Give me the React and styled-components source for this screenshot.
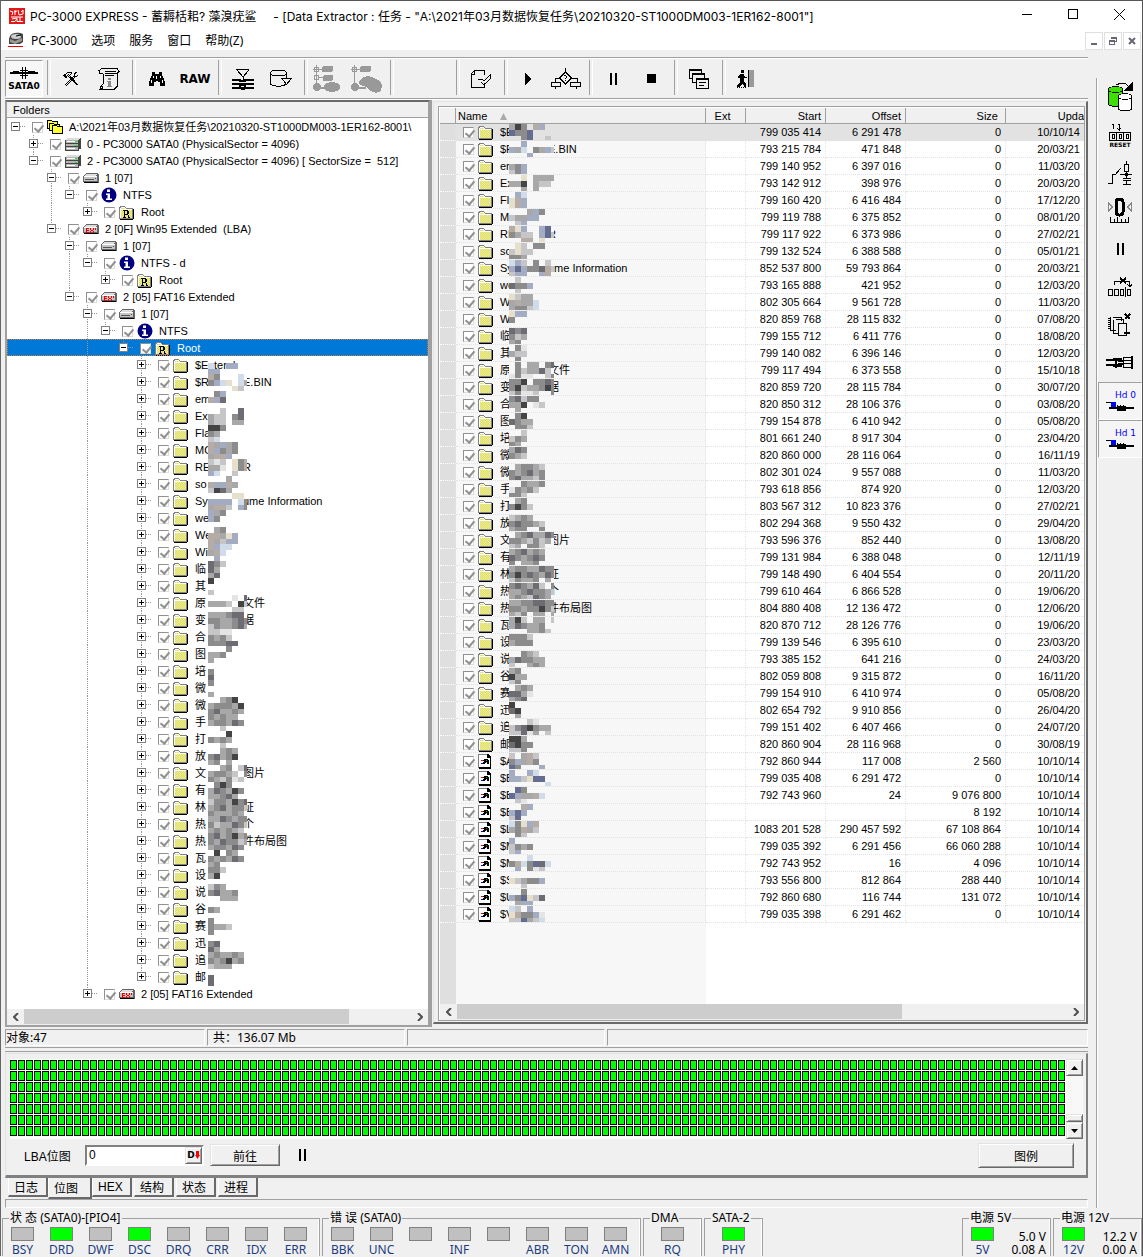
import React from "react";
import styled, { createGlobalStyle } from "styled-components";

const GlobalStyle = createGlobalStyle`
  * { box-sizing: border-box; }
  body {
    margin: 0;
    background: #f0f0f0;
    color: #000;
    font-family: "Liberation Sans", "Noto Sans CJK SC", sans-serif;
    font-size: 11px;
  }
  button, input { font: inherit; color: inherit; }
  button { padding: 0; }
`;

const uiFont = `"Noto Sans", "Noto Sans CJK SC", sans-serif`;
const titleFont = `Inter, "Noto Sans CJK SC", sans-serif`;

// colours of the censor blocks
const shades = {
  k: "#444", d: "#6c6c72", m: "#8c8c8c", g: "#a8a8a8", l: "#c6c6c8", w: "#e4e4e4",
  b: "#a4acc4", c: "#d0dcea", t: "#b6aca6", y: "#e6dfcc", n: "#646c90",
};

// [head, tail, tree blocks, list blocks]
const folders = [
  ["$Extend", "", "......./c..bb../bb.....", "gkm.tb./nmmn.../..mn..l"],
  ["$R", "E.BIN", "tm...c./mbcy.ct/....yl.", "..b..../bgc.mgbl/...b..."],
  ["em", "", ".mb..../tbd..../.......", "......./gmb..../lmb...."],
  ["Ex", "", "..l..d./gll.md./gll.gg.", "..y.gggg/ggk.gll./..g.g..."],
  ["Fla", "", "kkm..../mg...../lc.....", ".bc..../ytb..../ytb...."],
  ["MO", "", "tgbgm../tbmgm../gttb...", "...gbm./lggbb../.lb...."],
  ["RE", "R", "lwl.ymt/ggw.ymt/bc..l..", "tyb..bn/mgll.bnl/..tt.y."],
  ["so", "", "...g.../tbbtg../lkdg...", ".yl.mm./lyll.../mmg...."],
  ["System", "ume Information", "....yy./bbbb.cm/gttl.bm", "cbl.m.l/bnbmmdtl/lbb..bt"],
  ["we", "", "bgm..../bm...../.......", ".l...../dmmb.../.l....."],
  ["We", "", ".gm..../ttgyb../tglbb..", "ylgg.../gtggc../gmmlc.."],
  ["Wi", "", "tbcc.../gtc..../.b.....", "ybb..../m....../......."],
  ["临", "", "dml..../dg...../gd.....", "dmd..../mlg..../gm....."],
  ["其", "", "k....../......./l......", ".mw..../gll..../.m....."],
  ["原", "文件", "....w.d/gggl.kl/....ll.", ".m.gg.md/.mlggdl./wmww..lm"],
  ["变", "据", "gggmdd./mmggmdm/lmggmdg", "mmk.mmdm/mklggmkm/lmwwl..m"],
  ["合", "", "llww.../mgml.../mmmdd..", "mdlmm../ggk.wl./.g....."],
  ["图", "", "...m.../ggm..../g......", ".mk..../dmgg.../.mml..."],
  ["培", "", "......./m....../d......", "..l..../lmg..../mg....."],
  ["微", "", "m....../......./g......", "gdm..../mgl..../......."],
  ["微", "", "..gmk../gmmmgk./mdggmg.", ".gmmgl./mgmdgm./mdgglm."],
  ["手", "", "mgmgg../gmmgdm./..l....", "..mggm./wmgml../mml...."],
  ["打", "", "...k.../mgmg.../..l....", ".gm..../mkml.../......."],
  ["放", "", "..gmg../mdgmk../gm.g...", "lgmg.../mdmmgl./gmm..m."],
  ["文", "图片", "..gm.ld/gmmgl.m/mglmwl.", ".gmdggdm/mmglmlg./lg.mml.."],
  ["有", "", ".mkm.../gdmgkm./ggmdg..", "gmdgmg./dmgmdm./m.ggm.."],
  ["林", "证", "lmmgkmd/gmdgmml/mgggmg.", "gmmggdmm/mkmdmgdm/lmggm.g."],
  ["热", "个", "ggdmgmm/mlggdml/gmgmgl.", "mdmgdl.m/ggmdmmgl/gmgldmg."],
  ["热", "件布局图", "mdgmkgm/mgdmmlg/gmmgdm.", "ggmmddmm/mmgmmkml/glm.gg.g"],
  ["瓦", "", ".k.mg../mgmgdm./gm.....", "gkl.gg.l/gdmggm./...ggml"],
  ["设", "", "mml..../gk...../.......", "mmml.../gmmm.../......."],
  ["说", "", "lmg..../mdggm../..ggg..", "..mgl../gdmmgg./l..gmg."],
  ["谷", "", "......./mg...../.......", "gm...../kgg..../lm....."],
  ["赛", "", "m....../mggl.../m......", ".gmg.../ddgw.../gmd...."],
  ["迅", "", "......./md...../dg.....", "k....../dk...../.g....."],
  ["追", "", "gmggmg./mgmkgm./lggg...", "...lw../lmdkmgg/lldwg.l"],
  ["邮", "", "......./d....../d......", "kkg..../dkmm.../llm...."],
];

const folderStats = [
  ["799 035 414", "6 291 478", "10/10/14"], ["793 215 784", "471 848", "20/03/21"],
  ["799 140 952", "6 397 016", "11/03/20"], ["793 142 912", "398 976", "20/03/20"],
  ["799 160 420", "6 416 484", "17/12/20"], ["799 119 788", "6 375 852", "08/01/20"],
  ["799 117 922", "6 373 986", "27/02/21"], ["799 132 524", "6 388 588", "05/01/21"],
  ["852 537 800", "59 793 864", "20/03/21"], ["793 165 888", "421 952", "12/03/20"],
  ["802 305 664", "9 561 728", "11/03/20"], ["820 859 768", "28 115 832", "07/08/20"],
  ["799 155 712", "6 411 776", "18/08/20"], ["799 140 082", "6 396 146", "12/03/20"],
  ["799 117 494", "6 373 558", "15/10/18"], ["820 859 720", "28 115 784", "30/07/20"],
  ["820 850 312", "28 106 376", "03/08/20"], ["799 154 878", "6 410 942", "05/08/20"],
  ["801 661 240", "8 917 304", "23/04/20"], ["820 860 000", "28 116 064", "16/11/19"],
  ["802 301 024", "9 557 088", "11/03/20"], ["793 618 856", "874 920", "12/03/20"],
  ["803 567 312", "10 823 376", "27/02/21"], ["802 294 368", "9 550 432", "29/04/20"],
  ["793 596 376", "852 440", "13/08/20"], ["799 131 984", "6 388 048", "12/11/19"],
  ["799 148 490", "6 404 554", "20/11/20"], ["799 610 464", "6 866 528", "19/06/20"],
  ["804 880 408", "12 136 472", "12/06/20"], ["820 870 712", "28 126 776", "19/06/20"],
  ["799 139 546", "6 395 610", "23/03/20"], ["793 385 152", "641 216", "24/03/20"],
  ["802 059 808", "9 315 872", "16/11/20"], ["799 154 910", "6 410 974", "05/08/20"],
  ["802 654 792", "9 910 856", "26/04/20"], ["799 151 402", "6 407 466", "24/07/20"],
  ["820 860 904", "28 116 968", "30/08/19"],
];

const files = [
  ["$A", "l.gtl../mbgtm../nm...b.", "792 860 944", "117 008", "2 560"],
  ["$B", "b..bc../bblynn./......c", "799 035 408", "6 291 472", "0"],
  ["$B", ".nm..../nbggtc./.lw....", "792 743 960", "24", "9 076 800"],
  ["$B", "..tb.../bnb..../ln.....", "", "", "8 192"],
  ["$L", "cmybt../gmtgl../.ml....", "1083 201 528", "290 457 592", "67 108 864"],
  ["$M", "b....../lmgm.../lb.....", "799 035 392", "6 291 456", "66 060 288"],
  ["$M", "...c.../mtcmndc/.b.mwl.", "792 743 952", "16", "4 096"],
  ["$S", "......./ylgmmb./..l....", "793 556 800", "812 864", "288 440"],
  ["$U", "..m..../bmnyld./.gbb...", "792 860 680", "116 744", "131 072"],
  ["$V", "cl.b.../ytmmbw./llnglc.", "799 035 398", "6 291 462", "0"],
];

/* ---------- small drawings ---------- */

const FolderIcon = ({ letter }) => (
  <svg width="16" height="16" viewBox="0 0 16 16" shapeRendering="crispEdges">
    <defs>
      <pattern id="dither" width="2" height="2" patternUnits="userSpaceOnUse">
        <rect width="2" height="2" fill="#ff0" />
        <rect width="1" height="1" fill="#ccf" />
        <rect x="1" y="1" width="1" height="1" fill="#ccf" />
      </pattern>
    </defs>
    <path d="M14 5h1v10h-1v1H1v-1h13z" fill="#000" />
    <path d="M0 4V3h1V2h5v1h1v1h7v11H0z" fill="#808080" />
    <path d="M1 4h1V3h4v1h1v1h6v9H1z" fill="#fff" />
    <path d="M2 6h11v8H2zM2 4h4v1H2z" fill="url(#dither)" />
    {letter && <path d="M4 6h5v1h1v3H9v1h1v2h1v1H9v-3H6v2h1v1H4v-1h1V7H4zM6 7v3h2V7z" fill="#000" fillRule="evenodd" />}
  </svg>
);

const FileIcon = () => (
  <svg width="16" height="16" viewBox="0 0 16 16" shapeRendering="crispEdges">
    <path d="M1 1h9l3 3v12H1z" fill="#000" />
    <path d="M0 1h9v1H0zM0 1h1v14H0z" fill="#808080" />
    <path d="M1 2h8v3h3v9H1z" fill="#fff" />
    <path d="M3 7h2v1H3z" fill="#f00" />
    <path d="M3 10h2v1H3z" fill="#00f" />
    <path d="M5 7h1V6h4v1h1v4H9v-1H7v1H5V9h1V8H5z" fill="#000" />
    <path d="M8 7h1v1H8z" fill="#0a0" />
    <path d="M8 9h1v1H8z" fill="#dd0" />
  </svg>
);

const StackIcon = () => (
  <svg width="16" height="16" viewBox="0 0 16 16" shapeRendering="crispEdges">
    <g fill="#ff3" stroke="#000">
      <path d="M.5 9.500v-8h4l1 1h5v7z" />
      <path d="M2.500 11.500v-7h4l1 1h5v6z" />
      <path d="M5.500 14.500v-8h4l1 1h5v7z" />
    </g>
  </svg>
);

const DiskIcon = () => (
  <svg width="16" height="14" viewBox="0 0 16 14" shapeRendering="crispEdges">
    <path d="M2 1h14v11h-2v2H0V3z" fill="#444" />
    <path d="M2 1h13l-2 2H1z" fill="#ddd" />
    <path d="M1 3h12v3H1zM1 7h12v2H1zM1 10h12v3H1z" fill="#b4b4b4" />
    <path d="M2 4h8v1H2zM2 11h8v1H2z" fill="#fff" />
    <path d="M10 4h2v1h-2zM10 8h2v1h-2z" fill="#0f0" />
  </svg>
);

const DriveIcon = ({ ext }) => (
  <svg width="16" height="10" viewBox="0 0 16 10" shapeRendering="crispEdges">
    <path d="M3 0h11l2 2v7l-1 1H1V9H0V3z" fill="#666" />
    <path d="M3 1h11l-1 2H1z" fill="#ddd" />
    <path d="M1 3h13v5H1z" fill="#c4c4c4" />
    <path d="M1 3h13v1H1z" fill="#fff" />
    <path d="M1 9h14v1H1z" fill="#000" />
    {ext
      ? <path d="M3 4h3v1H4v1h2v1H4v1h2v1H3zM7 4h1v2h1v1H8v2H7V7h1V6H7zM10 4h1v2h-1v1h1v2h-1V7H9V6h1zM12 4h1v2h-1z" fill="#e00" />
      : <path d="M2 6h9v1H2zM12 5h1v1h-1z" fill="#555" />}
  </svg>
);

const InfoIcon = () => (
  <svg width="16" height="16" viewBox="0 0 16 16">
    <circle cx="8" cy="8" r="7.500" fill="#000080" />
    <path d="M6 2.500h3v2.500H6zM5 6.500h4v5h2v1.500H5v-1.500h1.500V8H5z" fill="#fff" />
  </svg>
);

const LogoIcon = () => (
  <svg width="16" height="16" viewBox="0 0 16 16">
    <rect width="16" height="16" fill="#e01818" />
    <path d="M1 3l3 1-1 3M6 2v5M5 4l3-1M9 2l1 5 4-1V2l-2 2M2 9h12M3 11l5-1M2 13.500h4l2-3v3h6M11 9v4" stroke="#fff" fill="none" />
  </svg>
);

const DiscIcon = () => (
  <svg width="16" height="16" viewBox="0 0 16 16">
    <path d="M2 4c2-4 9-4 13-2v8l-3 2H1V7z" fill="#444" />
    <ellipse cx="8" cy="4.500" rx="5" ry="2.500" fill="#ccc" />
    <path d="M2 7l5 2 7-3v3l-7 3-5-2z" fill="#999" />
    <path d="M8 4l5-1" stroke="#000" />
    <path d="M0 14.500h15" stroke="#e00" strokeWidth="1" />
  </svg>
);

const Icon = ({ w = 30, h = 30, children }) => (
  <svg width={w} height={h} viewBox={`0 0 ${w} ${h}`} shapeRendering="crispEdges" fill="none" stroke="#000">
    {children}
  </svg>
);

const SataIcon = () => (
  <Icon w={28} h={14}>
    <path d="M0 7h28M3 6h6M18 6h7" strokeWidth="2" />
    <path d="M12.500 1v12M15.500 1v12M10 4.500h8M10 9.500h8" />
  </Icon>
);
const ToolsIcon = () => (
  <Icon w={16} h={16}>
    <path d="M1 5l4-4 4 1-3 3M4 4l10 10M5 3l10 11" />
    <path d="M14 1l-3 2v2l2 1 2-2M11 5l-9 9M12 6l-9 9" />
    <path d="M1 4l3 3" strokeWidth="2" />
  </Icon>
);
const ScrollIcon = () => (
  <Icon w={24} h={24}>
    <path d="M5 1.500h15l2 3-2 2H8M5 1.500l-3 2 1 3h3l1 9-3 4-1 3h14l3-3V6M8 4.500h11M8 8.500h9" />
    <path d="M3 19l3 1-2 3" />
    <path d="M11 11h3v2h-3zM10 14h4v5h1v1h-5v-1h1v-4h-1z" fill="#888" stroke="none" />
  </Icon>
);
const BinocularIcon = () => (
  <Icon w={16} h={14}>
    <path d="M3 0h3v2h4V0h3v3l1 2 2 5v4h-5v-4H9V9H7v1H5v4H0v-4l2-5 1-2z" fill="#000" stroke="none" />
    <path d="M4.500 4v2M2.500 8v3M11.500 4v2M13.500 8v3M7.500 4v3" stroke="#fff" />
  </Icon>
);
const PressIcon = () => (
  <Icon w={24} h={22}>
    <path d="M5 1.500h13M6 2l6 7 6-7M12 9v3" />
    <path d="M1 12h8v1h5v-1h9M1 16h22M1 20h8l3 1 3-1h8M9 17h5v3H9z" strokeWidth="2" />
  </Icon>
);
const CylinderIcon = () => (
  <Icon w={24} h={20}>
    <path d="M1.500 4v10c0 4 14 4 15 1M1.500 4c0-4 16-4 16 0s-16 4-16 0M17.500 4v5" />
    <path d="M13 9.500h9.500l-5 6z" fill="#f0f0f0" />
  </Icon>
);
const TreeMapIcon = ({ blob }) => (
  <Icon w={32} h={28}>
    <g stroke="#999" fill="none">
      <path d="M3.500 0v26M0 4.500h12M1.500 2.500h4v4h-4z" />
      {!blob && <path d="M1.500 10.500h4v4h-4zM6 12.500h6" />}
      <path d="M3 23h12" strokeWidth="2" />
    </g>
    <g fill="#999" stroke="none">
      <rect x="9" y="1" width="11" height="6" rx="2" />
      <circle cx="4" cy="22" r="4" />
      {blob
        ? <path d="M11 13l5-2 5 1 4 2 4 2 2 4-1 6-5 2-6-2-4-4-6-2-1-3z" />
        : <g><rect x="10" y="10" width="10" height="6" rx="2" /><ellipse cx="19" cy="22" rx="8" ry="5" /></g>}
    </g>
  </Icon>
);
const DocIcon = () => (
  <Icon w={22} h={20}>
    <path d="M1.500 4.500l3-3h10v4M1.500 4v14.500h13V14M1.500 5.500h3v-4" />
    <path d="M8 10h4l2 2 6-6v4l-6 6-3-3" />
  </Icon>
);
const FlowIcon = () => (
  <Icon w={32} h={22}>
    <path d="M15.500 0v4M15.500 4l6 6-6 6-6-6zM9 10H5v4M21 10h6v4M1.500 14.500h9v4h-9zM20.500 14.500h10v4h-10zM5.500 18v3M26.500 18v3" />
    <path d="M14 7.500h2M16.500 8v2M15.500 10v1M15.500 12v1" />
  </Icon>
);
const PauseIcon = () => <Icon w={9} h={12}><path d="M2 0v12M7 0v12" strokeWidth="2" /></Icon>;
const PlayIcon = () => <Icon w={8} h={12}><path d="M1 0l6 6-6 6z" fill="#000" stroke="none" /></Icon>;
const StopIcon = () => <Icon w={9} h={9}><path d="M0 0h9v9H0z" fill="#000" stroke="none" /></Icon>;
const WindowsIcon = () => (
  <Icon w={20} h={22}>
    <g fill="#f0f0f0">
      <path d="M.5 1.500h12v9H.5z" /><path d="M0 2h13" strokeWidth="2" />
      <path d="M3.500 5.500h12v9h-12z" /><path d="M3 6h13" strokeWidth="2" />
      <path d="M7.500 10.500h12v10h-12z" /><path d="M7 11h13" strokeWidth="2" />
      <path d="M10 14.500h7M10 17.500h5" />
    </g>
  </Icon>
);
const ExitIcon = () => (
  <Icon w={20} h={20}>
    <path d="M5 1h3v3H5zM4 5h4l1 3h2v1H8v3l2 3v3H8l-1-4-3 4H1v-1l3-4V9H2V7z" fill="#000" stroke="none" />
    <path d="M1 18.500h9" strokeDasharray="1 1" />
    <path d="M12 1h6v17h-6z" fill="#999" stroke="none" />
    <path d="M12.500 1v17" />
  </Icon>
);

const CopyDiskIcon = () => (
  <Icon w={26} h={30}>
    <g strokeWidth="1">
      <path d="M1.500 8v14c0 3 14 3 14 0V8" fill="#3ce000" />
      <ellipse cx="8.500" cy="7.500" rx="7" ry="3" fill="#3ce000" />
      <path d="M11.500 15v11c0 4 13 4 13 0V15" fill="#fff" />
      <ellipse cx="18" cy="14.500" rx="6.500" ry="3" fill="#fff" />
      <path d="M9 3l5-2h4l5 5" />
      <path d="M25 1v7h-7z" fill="#000" />
    </g>
  </Icon>
);
const CounterIcon = () => (
  <Icon w={22} h={18}>
    <path d="M3 1.500h1v4M9 1.500h1v6M8 5l2 2 2-2M.5 9.500h21v8H.5zM7.500 9v8M14.500 9v8M3 11.500h2v4H3zM10 11.500h2v4h-2zM17 11.500h2v4h-2z" />
  </Icon>
);
const SwitchIcon = () => (
  <Icon w={24} h={24}>
    <path d="M0 22.500h4.500v-9h3l5-6M12 13h12M18.500 0v3M16.500 3.500h4v7h-4zM18.500 10v7M15 17.500h8M15 19.500h8M18.500 20v4M15 23.500h8" />
    <path d="M17 13h3" strokeWidth="3" />
  </Icon>
);
const ZeroIcon = () => (
  <Icon w={26} h={28}>
    <rect x="9" y="2" width="7" height="16" rx="3" strokeWidth="3" />
    <path d="M1.500 6v8l4-4zM24.500 6v8l-4-4z" stroke="#888" />
    <path d="M3 25.500h19M3.500 20v5M7.500 22v3M10.500 20v5M14.500 22v3M18.500 22v3M21.500 20v5" />
  </Icon>
);
const DigitsIcon = () => (
  <Icon w={24} h={20}>
    <path d="M.5 12.500h4v6h-4zM6.500 12.500h4v6h-4zM12.500 12.500h3v6h-3zM19.500 12.500h3v6h-3zM17.500 10v10M6.500 8V4h15v5M19 7l3 3 2-3" />
    <path d="M12 1l6 5M18 1l-6 5" strokeWidth="2" />
  </Icon>
);
const PagesIcon = () => (
  <Icon w={24} h={24}>
    <path d="M4.500 4.500h9v3M2.500 4v13h5M7.500 6.500h8v4M5.500 7v13h5M10.500 10.500h8v12h-8z" />
    <path d="M1 5v12" strokeWidth="2" strokeDasharray="1 1" />
    <path d="M17 1l5 5M22 1l-5 5M16 20h6" strokeWidth="2" />
  </Icon>
);
const ConnectorIcon = () => (
  <Icon w={28} h={14}>
    <path d="M0 4h12M0 9h12" strokeWidth="2" />
    <path d="M7 3h9M7 10h9M10 2v10M12 5h5M12 8h5" strokeWidth="2" />
    <path d="M17 1.500h8M17 4.500h8M17 7.500h8M17 11.500h8M17.500 2v10" />
    <path d="M26 0v13" strokeWidth="2" />
  </Icon>
);
const HdPlugIcon = () => (
  <Icon w={28} h={12}>
    <path d="M0 2.500h5" />
    <path d="M5 2h5v5H5z" fill="#00f" stroke="none" />
    <path d="M3 8h25M11 8h10" strokeWidth="2" />
    <path d="M11 5h1v1h2V5h1v1h2V5h1v1h2v5h-9z" fill="#000" stroke="none" />
  </Icon>
);

/* ---------- window ---------- */

const Window = styled.div`
  border-top: 1px solid #555;
  border-left: 1px solid #666;
  border-right: 1px solid #555;
  background: #f0f0f0;
`;

const TitleBar = styled.header`
  display: flex;
  align-items: center;
  height: 29px;
  padding-left: 8px;
  gap: 5px;
  background: #fff;
  font: 12px ${titleFont};
  white-space: pre;
`;

const Title = styled.span`
  flex: 1;
`;

const CaptionButton = styled.button`
  width: 46px;
  height: 29px;
  border: 0;
  background: none;
`;

const MenuBar = styled.nav`
  display: flex;
  align-items: center;
  height: 20px;
  padding: 0 1px 0 7px;
  background: #fff;
  font: 12px ${uiFont};
`;

const MenuItem = styled.button`
  border: 0;
  background: none;
  padding: 0 7px;
  white-space: nowrap;
`;

const MdiButtons = styled.div`
  display: flex;
  align-self: flex-end;
  gap: 1px;
  margin-left: auto;
`;

const MdiButton = styled.button`
  width: 18px;
  height: 18px;
  border: 1px solid #e0e0e0;
  background: #fff;
`;

const Body = styled.div`
  display: flex;
`;

const Main = styled.main`
  flex: 1;
  min-width: 0;
  padding: 7px 8px 0 4px;
`;

const Toolbar = styled.div`
  display: flex;
  height: 42px;
  border-top: 1px solid #a0a0a0;
  border-bottom: 1px solid #a0a0a0;
  box-shadow: inset 0 1px #fff, 0 1px #fff;
  padding-top: 2px;
`;

const ToolButton = styled.button`
  display: flex;
  flex-direction: column;
  align-items: center;
  justify-content: center;
  width: 38px;
  height: 37px;
  border: 1px solid;
  border-color: ${(p) => (p.$down ? "#a0a0a0 #fff #fff #a0a0a0" : "transparent")};
  background: ${(p) => (p.$down ? "#f7f7f7" : "none")};
  font: bold ${(p) => (p.$small ? 9 : 12)}px "DejaVu Sans", sans-serif;
  line-height: 12px;
`;

const Separator = styled.div`
  width: ${(p) => p.$w || 10}px;
  padding-left: 4px;
  margin-left: ${(p) => p.$space || 0}px;
  &::before {
    content: "";
    display: block;
    width: 2px;
    height: 35px;
    border-left: 1px solid #a0a0a0;
    border-right: 1px solid #fff;
  }
`;

const Panes = styled.div`
  display: flex;
  margin-top: 1px;
`;

/* ---------- tree ---------- */

const TreePane = styled.section`
  flex: 0 0 425px;
  border: 2px solid;
  border-color: #696969 #a0a0a0 #a0a0a0 #a0a0a0;
  background: #fff;
`;

const TreeHeader = styled.div`
  height: 16px;
  padding-left: 6px;
  border-bottom: 1px solid #a0a0a0;
  background: #f0f0f0;
  line-height: 17px;
`;

const TreeList = styled.ul`
  margin: 0 0 7px;
  padding: 0;
  list-style: none;
`;

const ItemLabel = styled.label`
  display: flex;
  align-items: center;
  height: 16px;
  padding-left: 7px;
  text-align: left;
  svg { flex: none; }
`;

const TreeRow = styled.li`
  display: flex;
  height: 17px;
  line-height: 17px;
  white-space: pre;
  color: ${(p) => (p.$selected ? "#fff" : "#000")};
  background: ${(p) => (p.$selected ? "#0078d7" : "none")};
  outline: ${(p) => (p.$selected ? "1px dotted #d08030" : "none")};
  outline-offset: -1px;
  ${ItemLabel} { height: 18px; }
`;

const Guide = styled.span`
  display: flex;
  align-items: center;
  flex: none;
  width: 18px;
  padding-left: 4px;
  background: repeating-linear-gradient(#999 0 1px, transparent 1px 2px) 8px 0 / 1px
    ${(p) => ({ full: "100%", top: "50%", none: "0" }[p.$line])} no-repeat;
`;

const Expander = styled.button`
  flex: none;
  width: 9px;
  height: 9px;
  border: 1px solid #808080;
  background:
    linear-gradient(#000, #000) 1px 3px / 5px 1px no-repeat,
    linear-gradient(#000, #000) 3px 1px / 1px ${(p) => (p.$open ? 0 : 5)}px no-repeat,
    #fff;
`;

const Dots = styled.span`
  width: 5px;
  border-top: 1px dotted #999;
`;

const Check = styled.input.attrs({ type: "checkbox", defaultChecked: true })`
  appearance: none;
  position: relative;
  flex: none;
  width: 11px;
  height: 11px;
  margin: 0 4px 0 0;
  border: 1px solid;
  border-color: #909090 #ddd #ddd #909090;
  background: #fff;
  &:checked::after {
    content: "";
    position: absolute;
    left: 3px;
    top: 0;
    width: 4px;
    height: 7px;
    border: solid #909090;
    border-width: 0 2px 2px 0;
    transform: rotate(40deg);
  }
`;

const IconBox = styled.span`
  display: flex;
  flex: none;
  align-items: center;
  width: 16px;
  margin-right: 6px;
`;

const Name = styled.span`
  position: relative;
  display: flex;
`;

const Head = styled.span`
  flex: none;
  width: 48px;
  clip-path: ${(p) => (p.$cut ? `inset(0 ${48 - p.$cut}px 0 0)` : "none")};
`;

const Blocks = styled.svg`
  position: absolute;
  top: 0;
  left: ${(p) => p.$left}px;
  background: ${(p) => p.$paper};
`;

const Censored = ({ head, tail, blocks, left, cols, paper }) => (
  <Name>
    <Head $cut={head === "$Extend" && left > 10 ? 0 : left}>{head}</Head>
    {tail}
    <Blocks
      $left={left}
      $paper={tail ? paper : "transparent"}
      width={cols * 6 - 3}
      height="17"
      shapeRendering="crispEdges"
      aria-hidden="true"
    >
      {blocks.split("/").map((line, y) =>
        [...line].map((c, x) => c !== "." && (
          <rect key={`${x}-${y}`} x={x * 6} y={y * 6} width="6" height="6" fill={shades[c]} />
        ))
      )}
    </Blocks>
  </Name>
);

const icons = {
  stack: <StackIcon />,
  disk: <DiskIcon />,
  drive: <DriveIcon />,
  ext: <DriveIcon ext />,
  info: <InfoIcon />,
  root: <FolderIcon letter />,
  folder: <FolderIcon />,
};

// level, own line, levels with a running line, expanded, icon, text
const topNodes = [
  [0, "none", [], true, "stack", "A:\\2021年03月数据恢复任务\\20210320-ST1000DM003-1ER162-8001\\"],
  [1, "full", [], false, "disk", "0 - PC3000 SATA0 (PhysicalSector = 4096)"],
  [1, "top", [], true, "disk", "2 - PC3000 SATA0 (PhysicalSector = 4096) [ SectorSize =  512]"],
  [2, "full", [], true, "drive", "1 [07]"],
  [3, "top", [2], true, "info", "NTFS"],
  [4, "top", [2], false, "root", "Root"],
  [2, "top", [], true, "ext", "2 [0F] Win95 Extended  (LBA)"],
  [3, "full", [], true, "drive", "1 [07]"],
  [4, "top", [3], true, "info", "NTFS - d"],
  [5, "top", [3], false, "root", "Root"],
  [3, "top", [], true, "ext", "2 [05] FAT16 Extended"],
  [4, "full", [], true, "drive", "1 [07]"],
  [5, "top", [4], true, "info", "NTFS"],
  [6, "top", [4], true, "root", "Root", true],
];

const TreeNode = ({ node, children }) => {
  const [level, line, running, open, icon, text, selected] = node;
  return (
    <TreeRow $selected={selected}>
      {Array.from({ length: level }, (_, i) => (
        <Guide key={i} $line={running.includes(i) ? "full" : "none"} />
      ))}
      <Guide $line={line}>
        <Expander $open={open} aria-label={open ? "-" : "+"} />
        <Dots />
      </Guide>
      <ItemLabel>
        <Check />
        <IconBox>{icons[icon]}</IconBox>
        {children || text}
      </ItemLabel>
    </TreeRow>
  );
};

const Tree = () => (
  <TreePane>
    <TreeHeader>Folders</TreeHeader>
    <TreeList>
      {topNodes.map((n, i) => <TreeNode key={i} node={n} />)}
      {folders.map(([head, tail, blocks], i) => (
        <TreeNode key={i} node={[7, i === folders.length - 1 ? "top" : "full", [4], false, "folder"]}>
          <Censored head={head} tail={tail} blocks={blocks} left={13} cols={7} paper="#fff" />
        </TreeNode>
      ))}
      <TreeNode node={[4, "top", [], false, "ext", "2 [05] FAT16 Extended"]} />
    </TreeList>
    <HScroll size="84%" />
  </TreePane>
);

/* ---------- scroll bars ---------- */

const HBar = styled.div`
  display: flex;
  height: 16px;
  background: #f0f0f0;
`;

const HArrow = styled.button`
  flex: none;
  width: 17px;
  border: 0;
  background: none;
`;

const HTrack = styled.div`
  flex: 1;
`;

const HThumb = styled.div`
  width: ${(p) => p.$size};
  height: 15px;
  background: #cdcdcd;
`;

const HScroll = ({ size }) => (
  <HBar>
    <HArrow aria-label="left">
      <svg width="6" height="8" fill="none" stroke="#505050" strokeWidth="2"><path d="M5 0L1 4l4 4" /></svg>
    </HArrow>
    <HTrack><HThumb $size={size} /></HTrack>
    <HArrow aria-label="right">
      <svg width="6" height="8" fill="none" stroke="#505050" strokeWidth="2"><path d="M1 0l4 4-4 4" /></svg>
    </HArrow>
  </HBar>
);

/* ---------- file list ---------- */

const Splitter = styled.div`
  width: 2px;
  margin-right: 1px;
  background: #a0a0a0;
`;

const ListPane = styled.section`
  flex: 1;
  min-width: 0;
  display: flex;
  margin: 1px 0 3px;
  padding: 4px 1px 1px 4px;
  border: solid;
  border-width: 1px 2px 2px 1px;
  border-color: #e3e3e3 #696969 #696969 #e3e3e3;
`;

const ListFrame = styled.div`
  flex: 1;
  min-width: 0;
  display: flex;
  flex-direction: column;
  border: 1px solid #a0a0a0;
  padding: 1px 0 0 1px;
  background: #fff;
`;

const ListTable = styled.table`
  width: 100%;
  table-layout: fixed;
  border-spacing: 0;
`;

const Th = styled.th`
  height: 16px;
  padding: 1px ${(p) => p.$pad ?? 4}px 0 2px;
  border-right: 1px solid #a0a0a0;
  border-bottom: 1px solid #a0a0a0;
  background: #f0f0f0;
  font-weight: normal;
  line-height: 14px;
  text-align: ${(p) => p.$align || "right"};
  white-space: nowrap;
  overflow: hidden;
  &:last-child { border-right: 0; }
`;

const Td = styled.td`
  height: 17px;
  padding: 0 4px 0 0;
  border-right: 1px dotted #e2e2e2;
  border-bottom: 1px dotted #e2e2e2;
  line-height: 16px;
  text-align: right;
  white-space: nowrap;
  overflow: hidden;
  &:last-child { padding-right: 4px; border-right: 0; }
`;

const Tr = styled.tr`
  background: ${(p) => (p.$current ? "#e2e2e2" : "#fff")};
  ${Td}:nth-child(1) { background: #dfdfdf; border-bottom-color: #fff; }
  ${Td}:nth-child(2) { background: ${(p) => (p.$current ? "#e2e2e2" : "#f7f7f7")}; }
`;

const Col = styled.col`
  width: ${(p) => (p.$w ? `${p.$w}px` : "auto")};
`;

const Filler = styled.div`
  flex: 1;
  display: grid;
  grid-template-columns: 16px 250px 1fr;
`;

const FillerCell = styled.span`
  background: ${(p) => p.$tone};
`;

const rows = [
  ...folders.map(([head, tail, , blocks], i) => {
    const [start, offset, date] = folderStats[i];
    return { head, tail, blocks, start, offset, size: "0", date, folder: true };
  }),
  ...files.map(([head, blocks, start, offset, size]) => ({ head, blocks, start, offset, size, date: "10/10/14" })),
];

const FileList = () => (
  <ListPane>
    <ListFrame>
      <ListTable>
        <colgroup>
          {[16, 250, 40, 80, 80, 100, 0].map((w, i) => <Col key={i} $w={w} />)}
        </colgroup>
        <thead>
          <tr>
            <Th aria-label="mark" />
            <Th $align="left">Name &nbsp;&nbsp; <svg width="7" height="7"><path d="M3.500 0L7 7H0z" fill="#aaa" /></svg></Th>
            <Th $align="center" $pad={8}>Ext</Th>
            <Th>Start</Th>
            <Th>Offset</Th>
            <Th $pad={7}>Size</Th>
            <Th $pad={0}>Upda</Th>
          </tr>
        </thead>
        <tbody>
          {rows.map((r, i) => (
            <Tr key={i} $current={i === 0}>
              <Td />
              <Td>
                <ItemLabel>
                  <Check />
                  <IconBox>{r.folder ? <FolderIcon /> : <FileIcon />}</IconBox>
                  <Censored head={r.head} tail={r.tail} blocks={r.blocks} left={9} cols={8} paper="#f7f7f7" />
                </ItemLabel>
              </Td>
              <Td />
              <Td>{r.start}</Td>
              <Td>{r.offset}</Td>
              <Td>{r.size}</Td>
              <Td>{r.date}</Td>
            </Tr>
          ))}
        </tbody>
      </ListTable>
      <Filler>
        <FillerCell $tone="#dfdfdf" />
        <FillerCell $tone="#f7f7f7" />
      </Filler>
      <HScroll size="73%" />
    </ListFrame>
  </ListPane>
);

/* ---------- status line and sector map ---------- */

const StatusLine = styled.div`
  display: grid;
  grid-template-columns: 200px 198px 198px 1fr;
  gap: 2px;
  margin-top: 2px;
  padding-bottom: 1px;
  border-bottom: 1px solid #a0a0a0;
  font: 12px ${uiFont};
`;

const StatusCell = styled.div`
  height: 17px;
  padding-left: ${(p) => p.$pad || 0}px;
  border: 1px solid;
  border-color: #a0a0a0 #fff #fff #a0a0a0;
  line-height: 15px;
  white-space: pre;
`;

const MapPane = styled.section`
  margin-top: 3px;
  padding-top: 1px;
  border-top: 1px solid #a0a0a0;
`;

const MapFrame = styled.div`
  padding: 5px 3px 4px 4px;
  border: solid;
  border-width: 1px 2px 3px 1px;
  border-color: #e3e3e3 #808080 #808080 #e3e3e3;
`;

const MapRow = styled.div`
  display: flex;
  height: 80px;
  background: #fff;
`;

const Sectors = styled.div`
  flex: 1;
  display: grid;
  grid-template-columns: repeat(auto-fill, 7px);
  grid-auto-rows: 10px;
  gap: 1px;
  padding-top: 1px;
  overflow: hidden;
`;

const Sector = styled.span`
  border: 1px solid #000;
  background: #0f0;
`;

const VBar = styled.div`
  display: flex;
  flex-direction: column;
  width: 17px;
  background: #f8f8f8;
`;

const Raised = styled.button`
  border: 1px solid;
  border-color: #e3e3e3 #696969 #696969 #e3e3e3;
  box-shadow: inset 1px 1px #fff, inset -1px -1px #a0a0a0;
  background: #f0f0f0;
`;

const VArrow = styled(Raised)`
  display: flex;
  align-items: center;
  justify-content: center;
  height: 17px;
`;

const VThumb = styled(Raised)`
  height: 8px;
  margin-top: auto;
`;

const MapTools = styled.div`
  display: flex;
  align-items: center;
  height: 32px;
  padding: 0 9px 0 14px;
  font-size: 12px;
`;

const MapLabel = styled.label`
  width: 61px;
`;

const LbaBox = styled.div`
  display: flex;
  width: 119px;
  height: 21px;
  border: 2px solid;
  border-color: #808080 #fff #fff #808080;
  background: #fff;
`;

const LbaInput = styled.input`
  flex: 1;
  min-width: 0;
  border: 0;
  padding: 0 2px;
  background: none;
  outline: 0;
`;

const DropButton = styled(Raised)`
  width: 17px;
  font: bold 9px "DejaVu Sans", sans-serif;
  display: flex;
  align-items: center;
  justify-content: center;
`;

const PushButton = styled(Raised)`
  width: ${(p) => p.$w}px;
  height: ${(p) => p.$h}px;
  margin: 0 18px 0 6px;
`;

const LegendButton = styled(PushButton)`
  margin: 0 0 0 auto;
`;

const Tabs = styled.div`
  display: flex;
  gap: 2px;
  height: 21px;
  padding-left: 3px;
  font-size: 12px;
`;

const Tab = styled.button`
  width: ${(p) => (p.$active ? 44 : 40)}px;
  height: ${(p) => (p.$active ? 21 : 19)}px;
  margin: 0 ${(p) => (p.$active ? -2 : 0)}px;
  padding-left: 5px;
  text-align: left;
  border: solid;
  border-width: 0 2px 2px 1px;
  border-color: #808080 #696969 #696969 #fff;
  background: #f0f0f0;
`;

const Groove = styled.div`
  height: 9px;
  border: 1px solid;
  border-color: #a0a0a0 #fff #fff #a0a0a0;
`;

/* ---------- right side bar ---------- */

const SideBar = styled.aside`
  display: flex;
  flex-direction: column;
  flex: 0 0 46px;
  margin-top: 28px;
  border-left: 1px solid #a0a0a0;
  box-shadow: inset 1px 0 #fff;
  padding-left: 1px;
`;

const SideButton = styled.button`
  display: flex;
  flex-direction: column;
  align-items: center;
  justify-content: center;
  height: 38px;
  border: 1px solid;
  border-color: ${(p) => (p.$down ? "#a0a0a0 #fff #fff #a0a0a0" : "transparent")};
  background: ${(p) => (p.$down ? "#f5f5f5" : "none")};
  color: ${(p) => (p.$down ? "#00f" : "#000")};
  font: ${(p) => (p.$down ? "9px" : "bold 6px")} "DejaVu Sans", sans-serif;
`;

const HdName = styled.span`
  align-self: flex-end;
  margin-right: 5px;
`;

/* ---------- indicators ---------- */

const Footer = styled.footer`
  display: flex;
  gap: 2px;
  height: 46px;
  margin-top: 2px;
  padding: 0 0 0 1px;
  overflow: hidden;
  font: 12px ${uiFont};
`;

const Group = styled.fieldset`
  display: flex;
  flex: 0 0 ${(p) => p.$w}px;
  min-width: 0;
  height: 54px;
  margin: 0;
  margin-left: ${(p) => (p.$push ? "auto" : 0)};
  padding: 1px 0 0;
  border: 1px solid #a0a0a0;
  box-shadow: inset -1px 0 #fff;
  justify-content: ${(p) => (p.$center ? "center" : "flex-start")};
`;

const Legend = styled.legend`
  margin-left: 6px;
  padding: 0 1px;
  line-height: 16px;
  white-space: nowrap;
`;

const Lamp = styled.div`
  width: 39px;
  text-align: center;
  color: #1c3c80;
  line-height: 15px;
  &::before {
    content: "";
    display: block;
    width: 21px;
    height: 12px;
    margin: 0 auto 1px;
    border: 1px solid #808080;
    background: ${(p) => (p.$on ? "#0f0" : "#c0c0c0")};
  }
`;

const Reading = styled.div`
  flex: 1;
  padding: 3px 4px 0 0;
  line-height: 13px;
  text-align: right;
`;

const statusLamps = ["BSY", "DRD", "DWF", "DSC", "DRQ", "CRR", "IDX", "ERR"];
const errorLamps = ["BBK", "UNC", "", "INF", "", "ABR", "TON", "AMN"];

function App() {
  return (
    <Window>
      <GlobalStyle />
      <TitleBar>
        <LogoIcon />
        <Title>{`PC-3000 EXPRESS - 蓄耨栝耜? 藻溴疣鲨     - [Data Extractor : 任务 - "A:\\2021年03月数据恢复任务\\20210320-ST1000DM003-1ER162-8001"]`}</Title>
        <div>
          <CaptionButton aria-label="minimize"><Icon w={11} h={11}><path d="M0 5.500h10" /></Icon></CaptionButton>
          <CaptionButton aria-label="maximize"><Icon w={11} h={11}><path d="M.5.5h9v9h-9z" /></Icon></CaptionButton>
          <CaptionButton aria-label="close"><svg width="11" height="11" stroke="#000"><path d="M0 0l11 11M11 0L0 11" /></svg></CaptionButton>
        </div>
      </TitleBar>
      <MenuBar>
        <DiscIcon />
        {["PC-3000", "选项", "服务", "窗口", "帮助(Z)"].map((m) => <MenuItem key={m}>{m}</MenuItem>)}
        <MdiButtons>
          <MdiButton aria-label="minimize"><Icon w={10} h={10}><path d="M2 8h6" stroke="#667" strokeWidth="2" /></Icon></MdiButton>
          <MdiButton aria-label="restore"><Icon w={10} h={10}><path d="M3.500 3V1h5v4H7M1.500 4.500h5v4h-5zM1 5.500h6M3 2h6" stroke="#667" /></Icon></MdiButton>
          <MdiButton aria-label="close"><svg width="10" height="10"><path d="M2 2l6 6M8 2L2 8" stroke="#667" strokeWidth="2" /></svg></MdiButton>
        </MdiButtons>
      </MenuBar>

      <Body>
        <Main>
          <Toolbar>
            <ToolButton $down $small><SataIcon />SATA0</ToolButton>
            <Separator $w={9} />
            <ToolButton aria-label="tools"><ToolsIcon /></ToolButton>
            <ToolButton aria-label="info"><ScrollIcon /></ToolButton>
            <Separator />
            <ToolButton aria-label="find"><BinocularIcon /></ToolButton>
            <ToolButton>RAW</ToolButton>
            <Separator />
            <ToolButton aria-label="image"><PressIcon /></ToolButton>
            <ToolButton aria-label="disk"><CylinderIcon /></ToolButton>
            <Separator />
            <ToolButton aria-label="map"><TreeMapIcon /></ToolButton>
            <ToolButton aria-label="map area"><TreeMapIcon blob /></ToolButton>
            <Separator />
            <Separator $space={56} />
            <ToolButton aria-label="report"><DocIcon /></ToolButton>
            <Separator $w={9} />
            <ToolButton aria-label="start"><PlayIcon /></ToolButton>
            <ToolButton aria-label="script"><FlowIcon /></ToolButton>
            <Separator $w={9} />
            <ToolButton aria-label="pause"><PauseIcon /></ToolButton>
            <ToolButton aria-label="stop"><StopIcon /></ToolButton>
            <Separator />
            <ToolButton aria-label="windows"><WindowsIcon /></ToolButton>
            <Separator $w={9} />
            <ToolButton aria-label="exit"><ExitIcon /></ToolButton>
          </Toolbar>

          <Panes>
            <Tree />
            <Splitter />
            <FileList />
          </Panes>

          <StatusLine>
            <StatusCell>对象:47</StatusCell>
            <StatusCell $pad={5}>{"共：136.07 Mb"}</StatusCell>
            <StatusCell />
            <StatusCell />
          </StatusLine>

          <MapPane>
            <MapFrame>
              <MapRow>
                <Sectors>
                  {Array.from({ length: 924 }, (_, i) => <Sector key={i} />)}
                </Sectors>
                <VBar>
                  <VArrow aria-label="up"><svg width="7" height="4"><path d="M3.500 0L7 4H0z" /></svg></VArrow>
                  <VThumb aria-label="scroll" />
                  <VArrow aria-label="down"><svg width="7" height="4"><path d="M0 0h7L3.500 4z" /></svg></VArrow>
                </VBar>
              </MapRow>
              <MapTools>
                <MapLabel htmlFor="lba">LBA位图</MapLabel>
                <LbaBox>
                  <LbaInput id="lba" defaultValue="0" />
                  <DropButton>D<svg width="5" height="8"><path d="M1 0h3v4h1L2.500 8 0 4h1z" fill="#f00" /></svg></DropButton>
                </LbaBox>
                <PushButton $w={70} $h={22}>前往</PushButton>
                <PauseIcon />
                <LegendButton $w={96} $h={25}>图例</LegendButton>
              </MapTools>
            </MapFrame>
            <Tabs>
              {["日志", "位图", "HEX", "结构", "状态", "进程"].map((t, i) => (
                <Tab key={t} $active={i === 1}>{t}</Tab>
              ))}
            </Tabs>
            <Groove />
          </MapPane>
        </Main>

        <SideBar>
          <SideButton aria-label="copy"><CopyDiskIcon /></SideButton>
          <SideButton><CounterIcon />RESET</SideButton>
          <SideButton aria-label="power"><SwitchIcon /></SideButton>
          <SideButton aria-label="recalibrate"><ZeroIcon /></SideButton>
          <SideButton aria-label="hold"><PauseIcon /></SideButton>
          <SideButton aria-label="registers"><DigitsIcon /></SideButton>
          <SideButton aria-label="pages"><PagesIcon /></SideButton>
          <SideButton aria-label="connector"><ConnectorIcon /></SideButton>
          <SideButton $down><HdName>Hd 0</HdName><HdPlugIcon /></SideButton>
          <SideButton $down><HdName>Hd 1</HdName><HdPlugIcon /></SideButton>
        </SideBar>
      </Body>

      <Footer>
        <Group $w={318}>
          <Legend>状 态 (SATA0)-[PIO4]</Legend>
          {statusLamps.map((l) => <Lamp key={l} $on={l === "DRD" || l === "DSC"}>{l}</Lamp>)}
        </Group>
        <Group $w={319}>
          <Legend>错 误 (SATA0)</Legend>
          {errorLamps.map((l, i) => <Lamp key={i}>{l}</Lamp>)}
        </Group>
        <Group $w={59} $center>
          <Legend>DMA</Legend>
          <Lamp>RQ</Lamp>
        </Group>
        <Group $w={59} $center>
          <Legend>SATA-2</Legend>
          <Lamp $on>PHY</Lamp>
        </Group>
        <Group $w={89} $push>
          <Legend>电源 5V</Legend>
          <Lamp $on>5V</Lamp>
          <Reading>5.0 V<br />0.08 A</Reading>
        </Group>
        <Group $w={89}>
          <Legend>电源 12V</Legend>
          <Lamp $on>12V</Lamp>
          <Reading>12.2 V<br />0.00 A</Reading>
        </Group>
      </Footer>
    </Window>
  );
}

export default App;
